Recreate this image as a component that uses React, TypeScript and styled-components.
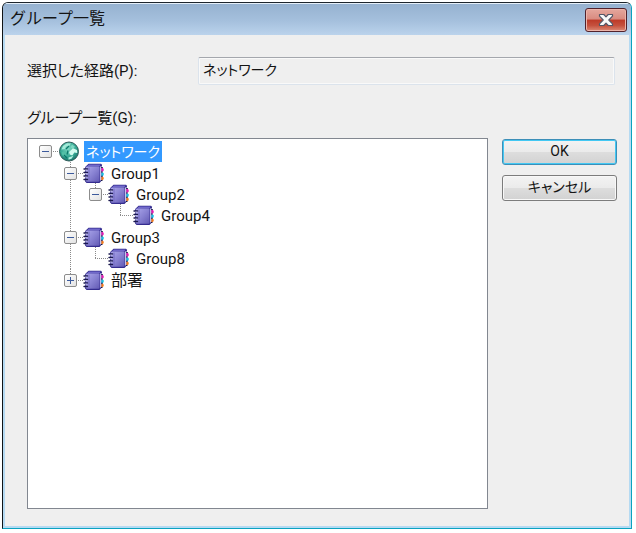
import React, { useState } from 'react';
import styled, { createGlobalStyle, css } from 'styled-components';

const GlobalStyle = createGlobalStyle`
  *, *::before, *::after { box-sizing: border-box; }
  body {
    margin: 0;
    background: #fff;
    color: #141414;
    font: 15px/20px Roboto, "Noto Sans CJK JP", sans-serif;
    font-feature-settings: "palt";
  }
  button, input { font: inherit; color: inherit; font-feature-settings: inherit; }
`;

const Screen = styled.div`
  display: flex;
  min-height: 100vh;
  padding: 2px 4px 4px 2px;
`;

const Dialog = styled.section`
  flex: 1;
  min-width: 0;
  display: flex;
  flex-direction: column;
  overflow: hidden;
  border: 1px solid;
  border-color: #1d252c #0aa3c0 #0aa3c0 #101416;
  border-radius: 6px 6px 0 0;
  background: #b5daf2;
  padding: 0 2px 2px;
`;

const TitleBar = styled.header`
  display: flex;
  align-items: center;
  justify-content: space-between;
  height: 32px;
  margin: 0 -2px;
  padding: 0 4px 0 7px;
  border-top: 1px solid #e4eef8;
  background: linear-gradient(#96b2d0, #a5c0dd 55%, #bbd3ec);
`;

const Title = styled.h1`
  margin: 0;
  padding-bottom: 2px;
  font-size: 16px;
  line-height: 24px;
  font-weight: 400;
  font-feature-settings: normal;
`;

const CloseButton = styled.button`
  display: grid;
  place-items: center;
  width: 42px;
  height: 24px;
  padding: 0;
  border: 1px solid #51222c;
  border-radius: 3px;
  background: linear-gradient(#e5a79d, #d98b80 46%, #bd3a28 50%, #c5513e 75%, #dc8a76);
  box-shadow: inset 0 0 0 1px #ecb5ab;
`;

const Body = styled.div`
  flex: 1;
  display: flex;
  flex-direction: column;
  padding: 22px 12px 17px 22px;
  background: #efefef;
`;

const PathRow = styled.div`
  display: grid;
  grid-template-columns: 171px 1fr;
  align-items: center;
  margin-right: 2px;
`;

const FieldLabel = styled.label`
  line-height: 24px;
`;

const PathInput = styled.input`
  width: 100%;
  min-width: 0;
  height: 28px;
  padding: 0 4px 4px;
  border: 1px solid #dbe3ec;
  border-top-color: #a4a7ad;
  border-radius: 2px;
  box-shadow: inset 0 0 0 1px #f9f9f9;
  background: #efefef;
  font-size: 14px;
  outline: none;
`;

const ListLabel = styled.div`
  margin-top: 21px;
  line-height: 24px;
`;

const Main = styled.div`
  flex: 1;
  display: grid;
  grid-template-columns: 1fr 115px;
  column-gap: 14px;
  margin-top: 8px;
`;

const TreePane = styled.div`
  padding: 2px 4px 2px 5px;
  overflow: auto;
  border: 1px solid #828790;
  background: #fff;
`;

const TreeList = styled.ul`
  margin: 0;
  padding: 0;
  list-style: none;
`;

const Branch = styled(TreeList)`
  padding-left: 25px;
`;

const dots = css`
  background-image: repeating-linear-gradient(var(--run), #8a8a8a 0 1px, transparent 1px 2px);
`;

const Node = styled.li<{ $depth: number; $last: boolean }>`
  position: relative;
  margin-top: ${(p) => (p.$depth === 1 ? 1 : 0)}px;

  &::before {
    ${dots}
    --run: 180deg;
    content: ${(p) => (p.$depth > 0 ? '""' : 'none')};
    position: absolute;
    left: 12px;
    top: -1px;
    width: 1px;
    ${(p) => (p.$last ? 'height: 12px;' : 'bottom: 0;')}
  }
`;

const Row = styled.div`
  position: relative;
  display: flex;
  align-items: center;
  height: 21px;
`;

const ExpanderCell = styled.div`
  ${dots}
  --run: 90deg;
  flex: none;
  display: flex;
  align-items: center;
  width: 13px;
  height: 13px;
  margin-left: 12px;
  background-size: 100% 1px;
  background-position: 0 6px;
  background-repeat: no-repeat;
`;

const Expander = styled.button`
  flex: none;
  display: grid;
  place-items: center;
  width: 13px;
  height: 13px;
  margin-left: -6px;
  padding: 0;
  border: 1px solid #8c8c8c;
  border-radius: 2px;
  background: linear-gradient(135deg, #fff, #e2e2e2);
`;

const NodeLabel = styled.button<{ $selected: boolean; $size: number }>`
  height: 21px;
  margin-left: 4px;
  padding: 0 2px;
  border: 0;
  white-space: nowrap;
  font-size: ${(p) => p.$size}px;
  line-height: 20px;
  background: ${(p) => (p.$selected ? '#3399ff' : 'transparent')};
  color: ${(p) => (p.$selected ? '#fff' : '#141414')};
`;

const Actions = styled.div`
  display: flex;
  flex-direction: column;
  gap: 10px;
  margin-top: 1px;
`;

const PushButton = styled.button<{ $default?: boolean }>`
  height: 26px;
  padding: 0 4px 2px;
  font-size: 14px;
  border: 1px solid ${(p) => (p.$default ? '#3c8fb8' : '#7c7c7c')};
  border-radius: 3px;
  background: linear-gradient(#f3f3f3, #ebebeb 48%, #dddddd 52%, #d2d2d2);
  box-shadow: inset 0 0 0 1px ${(p) => (p.$default ? '#43c8f3' : '#f8f8f8')};
`;

const Icon = styled.svg`
  flex: none;
  display: block;
`;

const GlobeIcon = () => (
  <Icon width="22" height="21" viewBox="0 0 22 21" aria-hidden="true">
    <defs>
      <radialGradient id="sea" cx="45%" cy="35%" r="70%">
        <stop offset="0" stopColor="#7fd9c4" />
        <stop offset=".6" stopColor="#35a893" />
        <stop offset="1" stopColor="#12685f" />
      </radialGradient>
    </defs>
    <circle cx="11" cy="10.5" r="9.500" fill="url(#sea)" stroke="#315d5b" strokeWidth="1" />
    <path d="M5 5l4-2.800 4 .3-2 2.500-3 .6-1 2.400-3.600.5z" fill="#a4ead8" />
    <path d="M14 3.500l3 2.200-2.500 2-2-1.500z" fill="#7fd8c3" />
    <path d="M11 11l4-3.800 4 1.800.3 3-3-.4-2 3-2.500-1z" fill="#d2fbef" />
    <path d="M3.500 11.500l4-1.800 2 2.600-2.200 3.600-3-1.600z" fill="#53bfa6" />
    <path d="M10.500 16.500l5-1.800-2 3-3 1z" fill="#b2f0e0" />
    <path d="M8 8l3-3M6 14l3 3M10 9.500l-1 4" stroke="#0b766a" strokeWidth="1.200" fill="none" />
  </Icon>
);

const BookIcon = () => (
  <Icon width="22" height="21" viewBox="0 0 22 21" aria-hidden="true">
    <defs>
      <linearGradient id="cover" x1="0" y1="0" x2="1" y2="1">
        <stop offset="0" stopColor="#aaa5ea" />
        <stop offset=".5" stopColor="#8882d2" />
        <stop offset="1" stopColor="#625ab4" />
      </linearGradient>
    </defs>
    <path d="M5.500.8H18l1 1v15.400L16.500 20H3.500l-1.300-1.400V4z" fill="#342c8e" />
    <path d="M5.800 1.600h11.800l-1.300 1.800H4z" fill="#7169cb" />
    <path d="M17.200 3.800l1.300-1v13.800l-1.300 1.500z" fill="#eeecff" />
    <rect x="3" y="3.600" width="13.600" height="15.200" rx="1" fill="url(#cover)" />
    <path d="M6 4.500v13.500" stroke="#746cc4" />
    <path d="M1 6h3.500M1 9.500h3.500M1 13h3.500M1 16.500h3.500" stroke="#1b1950" strokeWidth="1.400" strokeLinecap="round" />
    <path d="M2 7h2.500M2 10.500h2.500M2 14h2.500" stroke="#cfcdf0" strokeWidth=".7" />
    <path d="M18.400 5h1.500l.8 1v1.400l-.8 1h-1.500z" fill="#e21ab0" />
    <path d="M18.400 9.500h1.500l.8 1v1.400l-.8 1h-1.500z" fill="#18bfe0" />
    <path d="M18.400 13.800h1.500l.8 1v1.200l-.8 1h-1.500z" fill="#f07a1c" />
    <path d="M19 4v1M19 8.400v1M19 12.800v1M18.700 17v1" stroke="#171545" strokeWidth="1.600" />
  </Icon>
);

const ExpanderMark = ({ open }: { open: boolean }) => (
  <Icon width="7" height="7" viewBox="0 0 7 7" aria-hidden="true">
    <path d={open ? 'M0 3.5h7' : 'M0 3.5h7M3.5 0v7'} stroke="#3c5a9c" strokeWidth="1" />
  </Icon>
);

const CloseIcon = () => (
  <Icon width="16" height="14" viewBox="0 0 16 14" aria-hidden="true">
    <path
      d="M1.500 1.500h4.300L8 3.800l2.200-2.300h4.300v1.700L10.800 7l3.700 3.800v1.700h-4.300L8 10.200l-2.200 2.300H1.500v-1.700L5.200 7 1.500 3.200z"
      fill="#f8f8f8"
      stroke="#535666"
      strokeWidth="1.200"
      strokeLinejoin="round"
    />
  </Icon>
);

type Entry = { name: string; kind: 'globe' | 'book'; open?: boolean; children?: Entry[]; size?: number };

const network: Entry = {
  name: 'ネットワーク',
  kind: 'globe',
  open: true,
  size: 14,
  children: [
    {
      name: 'Group1',
      kind: 'book',
      open: true,
      children: [
        { name: 'Group2', kind: 'book', open: true, children: [{ name: 'Group4', kind: 'book' }] },
      ],
    },
    { name: 'Group3', kind: 'book', open: true, children: [{ name: 'Group8', kind: 'book' }] },
    { name: '部署', kind: 'book', open: false, children: [], size: 16 },
  ],
};

type TreeNodeProps = {
  entry: Entry;
  depth: number;
  last: boolean;
  selected: string;
  onSelect: (name: string) => void;
};

function TreeNode({ entry, depth, last, selected, onSelect }: TreeNodeProps) {
  const [open, setOpen] = useState(!!entry.open);
  const { children } = entry;
  return (
    <Node
      role="treeitem"
      aria-expanded={children ? open : undefined}
      aria-selected={selected === entry.name}
      $depth={depth}
      $last={last}
    >
      <Row>
        <ExpanderCell>
          {children && (
            <Expander type="button" aria-label={entry.name} onClick={() => setOpen(!open)}>
              <ExpanderMark open={open} />
            </Expander>
          )}
        </ExpanderCell>
        {entry.kind === 'globe' ? <GlobeIcon /> : <BookIcon />}
        <NodeLabel
          type="button"
          $selected={selected === entry.name}
          $size={entry.size ?? 15}
          onClick={() => onSelect(entry.name)}
        >
          {entry.name}
        </NodeLabel>
      </Row>
      {children && open && children.length > 0 && (
        <Branch role="group">
          {children.map((child, i) => (
            <TreeNode
              key={child.name}
              entry={child}
              depth={depth + 1}
              last={i === children.length - 1}
              selected={selected}
              onSelect={onSelect}
            />
          ))}
        </Branch>
      )}
    </Node>
  );
}

export default function App() {
  const [selected, setSelected] = useState(network.name);
  return (
    <>
      <GlobalStyle />
      <Screen>
        <Dialog role="dialog" aria-labelledby="dialog-title">
          <TitleBar>
            <Title id="dialog-title">グループ一覧</Title>
            <CloseButton type="button" aria-label="閉じる">
              <CloseIcon />
            </CloseButton>
          </TitleBar>
          <Body>
            <PathRow>
              <FieldLabel htmlFor="path">選択した経路(P):</FieldLabel>
              <PathInput id="path" readOnly value={selected} />
            </PathRow>
            <ListLabel id="list-label">グループ一覧(G):</ListLabel>
            <Main>
              <TreePane>
                <TreeList role="tree" aria-labelledby="list-label">
                  <TreeNode entry={network} depth={0} last selected={selected} onSelect={setSelected} />
                </TreeList>
              </TreePane>
              <Actions>
                <PushButton type="button" $default>
                  OK
                </PushButton>
                <PushButton type="button">キャンセル</PushButton>
              </Actions>
            </Main>
          </Body>
        </Dialog>
      </Screen>
    </>
  );
}
